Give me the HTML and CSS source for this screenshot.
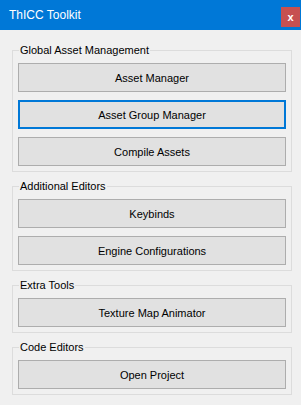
FILE: index.html
```html
<!DOCTYPE html>
<html>
<head>
    <title>ThICC Toolkit</title>
    <link rel="stylesheet" href="styles.css">
</head>
<body>
    <div class="window">
        <div class="titlebar">
            <span class="title">ThICC Toolkit</span>
            <button class="close">x</button>
        </div>
        <div class="content">
            <fieldset class="group">
                <legend>Global Asset Management</legend>
                <button class="btn">Asset Manager</button>
                <button class="btn focused">Asset Group Manager</button>
                <button class="btn">Compile Assets</button>
            </fieldset>
            <fieldset class="group">
                <legend>Additional Editors</legend>
                <button class="btn">Keybinds</button>
                <button class="btn">Engine Configurations</button>
            </fieldset>
            <fieldset class="group">
                <legend>Extra Tools</legend>
                <button class="btn">Texture Map Animator</button>
            </fieldset>
            <fieldset class="group">
                <legend>Code Editors</legend>
                <button class="btn">Open Project</button>
            </fieldset>
        </div>
    </div>
</body>
</html>
```

FILE: styles.css
```css
body {
    margin: 0;
    background-color: #f0f0f0;
    font-family: "Liberation Sans", Arial, sans-serif;
    font-size: 11px;
    color: #000;
}
.window {
    width: 301px;
    height: 405px;
    overflow: hidden;
}
.titlebar {
    display: flex;
    justify-content: space-between;
    height: 30px;
    background: #0078d7;
    color: white;
}
.title {
    font-size: 12px;
    line-height: 30px;
    padding-left: 9px;
}
.close {
    width: 19px;
    height: 20px;
    margin: 7px 1px 0 0;
    padding: 0;
    border: none;
    background: #c75050;
    color: white;
    font-family: "Liberation Sans", Arial, sans-serif;
    font-size: 11px;
    font-weight: bold;
    line-height: 20px;
}
.content {
    display: flex;
    flex-direction: column;
    gap: 8px;
    padding: 14px 9px 0 12px;
}
.group {
    display: flex;
    flex-direction: column;
    gap: 8px;
    margin: 0;
    padding: 6px 5px 5px 5px;
    border: 1px solid #dcdcdc;
    min-width: 0;
}
.group legend {
    padding: 0 1px;
    margin-left: 1px;
    line-height: 13px;
    font-size: 11px;
}
.btn {
    height: 29px;
    margin: 0;
    padding: 0;
    background: #e1e1e1;
    border: 1px solid #adadad;
    font-family: "Liberation Sans", Arial, sans-serif;
    font-size: 11px;
    color: #000;
}
.btn.focused {
    border: 2px solid #0078d7;
}
```
